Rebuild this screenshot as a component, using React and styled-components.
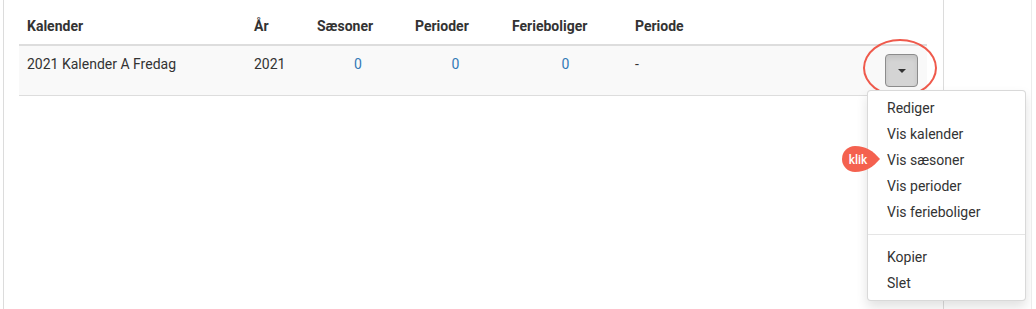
import styled, { createGlobalStyle } from 'styled-components';

const GlobalStyle = createGlobalStyle`
  html, body {
    margin: 0;
    padding: 0;
    background: #fff;
  }
  body {
    font-family: Roboto, "Liberation Sans", Arial, sans-serif;
    font-size: 14px;
    line-height: 20px;
    color: #333;
  }
`;

const columns = [
  { key: 'name', label: 'Kalender', width: 227 },
  { key: 'year', label: 'År', width: 63 },
  { key: 'seasons', label: 'Sæsoner', width: 98, link: true },
  { key: 'periods', label: 'Perioder', width: 97, link: true },
  { key: 'homes', label: 'Ferieboliger', width: 123, link: true },
  { key: 'period', label: 'Periode', width: 240 },
];

const rows = [
  { name: '2021 Kalender A Fredag', year: '2021', seasons: 0, periods: 0, homes: 0, period: '-' },
];

const menuItems = [
  ['Rediger', 'Vis kalender', 'Vis sæsoner', 'Vis perioder', 'Vis ferieboliger'],
  ['Kopier', 'Slet'],
];

const KlikBadge = () => (
  <Badge>
    <svg width="38" height="26" viewBox="0 0 38 26">
      <path d="M38 13 C31 5 24 0 13 0 A13 13 0 0 0 13 26 C24 26 31 21 38 13 Z" fill="#f4614f" />
      <text
        x="16"
        y="17.5"
        fill="#fff"
        fontSize="12"
        fontWeight="500"
        fontFamily="Roboto, Arial, sans-serif"
        textAnchor="middle"
      >
        klik
      </text>
    </svg>
  </Badge>
);

const App = () => {
  return (
    <Page>
      <GlobalStyle />
      <Panel>
        <Table>
          <colgroup>
            {columns.map((c) => (
              <col key={c.key} style={{ width: c.width }} />
            ))}
            <col />
          </colgroup>
          <thead>
            <tr>
              {columns.map((c) => (
                <Th key={c.key}>{c.label}</Th>
              ))}
              <Th />
            </tr>
          </thead>
          <tbody>
            {rows.map((r) => (
              <Row key={r.name}>
                {columns.map((c) => (
                  <Td key={c.key} $center={c.link}>
                    {c.link ? <CountLink href="#">{r[c.key]}</CountLink> : r[c.key]}
                  </Td>
                ))}
                <ActionTd>
                  <ButtonWrap>
                    <Highlight />
                    <CaretButton type="button">
                      <Caret />
                    </CaretButton>
                    <Menu>
                      {menuItems.map((group, gi) => (
                        <li key={gi}>
                          {gi > 0 && <Divider />}
                          <ul>
                            {group.map((label) => (
                              <MenuItem key={label}>
                                {label === 'Vis sæsoner' && <KlikBadge />}
                                {label}
                              </MenuItem>
                            ))}
                          </ul>
                        </li>
                      ))}
                    </Menu>
                  </ButtonWrap>
                </ActionTd>
              </Row>
            ))}
          </tbody>
        </Table>
      </Panel>
    </Page>
  );
};

const Page = styled.div`
  width: 1032px;
  height: 309px;
  border-right: 1px solid #ececec;
  box-sizing: border-box;
  padding-left: 3px;
  overflow: hidden;
`;

const Panel = styled.div`
  width: 941px;
  height: 309px;
  box-sizing: border-box;
  border-left: 1px solid #dcdcdc;
  border-right: 1px solid #dcdcdc;
  padding: 8px 15px 0;
`;

const Table = styled.table`
  width: 908px;
  table-layout: fixed;
  border-collapse: collapse;
  border-spacing: 0;
`;

const Th = styled.th`
  text-align: left;
  font-weight: 700;
  padding: 8px;
  line-height: 20px;
  border-bottom: 2px solid #ddd;
  color: #333;
`;

const Row = styled.tr`
  background: #f9f9f9;
  border-bottom: 1px solid #ddd;
`;

const Td = styled.td`
  padding: 8px;
  vertical-align: top;
  line-height: 20px;
  text-align: ${(p) => (p.$center ? 'center' : 'left')};
`;

const ActionTd = styled.td`
  padding: 8px 9px 8px 8px;
  text-align: right;
  vertical-align: top;
`;

const CountLink = styled.a`
  color: #337ab7;
  text-decoration: none;
`;

const ButtonWrap = styled.div`
  position: relative;
  display: inline-block;
  vertical-align: top;
`;

const CaretButton = styled.button`
  width: 33px;
  height: 33px;
  padding: 0;
  display: flex;
  align-items: center;
  justify-content: center;
  background: #d4d4d4;
  border: 1px solid #8c8c8c;
  border-radius: 4px;
  box-shadow: inset 0 3px 5px rgba(0, 0, 0, 0.08);
`;

const Caret = styled.span`
  width: 0;
  height: 0;
  border-top: 4px solid #333;
  border-left: 4px solid transparent;
  border-right: 4px solid transparent;
`;

const Highlight = styled.span`
  position: absolute;
  left: -22px;
  top: -15px;
  width: 74px;
  height: 58px;
  box-sizing: border-box;
  border: 2px solid #ef5a4c;
  border-radius: 50%;
  pointer-events: none;
`;

const Menu = styled.ul`
  position: absolute;
  top: 36px;
  right: -108px;
  width: 159px;
  box-sizing: border-box;
  margin: 0;
  padding: 4px 0;
  list-style: none;
  text-align: left;
  background: #fff;
  border: 1px solid rgba(0, 0, 0, 0.15);
  border-radius: 4px;
  box-shadow: 0 6px 12px rgba(0, 0, 0, 0.12);
  z-index: 10;

  ul {
    margin: 0;
    padding: 0;
    list-style: none;
  }
`;

const MenuItem = styled.li`
  position: relative;
  padding: 3px 19px;
  line-height: 20px;
  color: #333;
  white-space: nowrap;
`;

const Divider = styled.div`
  height: 1px;
  margin: 9px 0;
  background: #e5e5e5;
`;

const Badge = styled.span`
  position: absolute;
  left: -26px;
  top: -1px;
  display: block;
  line-height: 0;
`;

export default App;
